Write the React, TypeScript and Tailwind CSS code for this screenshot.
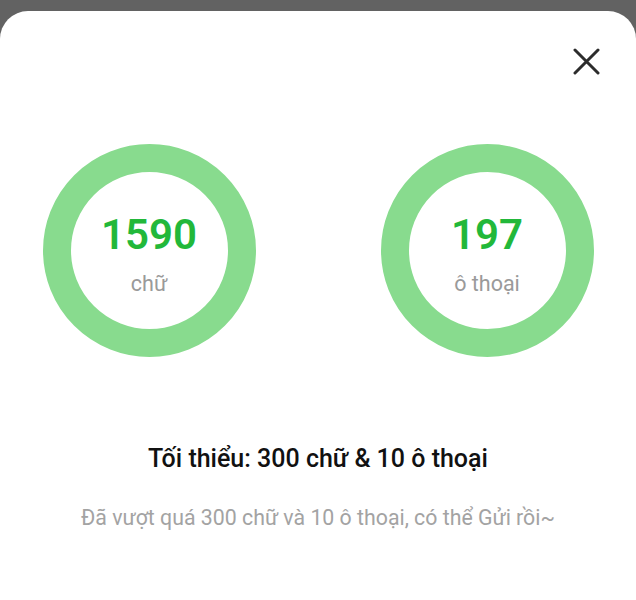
type RingProps = {
  value: number;
  label: string;
};

function CountRing({ value, label }: RingProps) {
  return (
    <div className="flex h-[213px] w-[213px] flex-col items-center justify-center rounded-full border-[28px] border-[#88db8e] pt-[6px]">
      <span className="text-[42px] font-semibold leading-[48px] text-[#22b83a]">
        {value}
      </span>
      <span className="mt-[12px] text-[21.5px] leading-[26px] text-[#9a9a9a]">
        {label}
      </span>
    </div>
  );
}

export default function App() {
  return (
    <div
      className="h-[600px] w-[636px] overflow-hidden bg-[#626262] pt-[11px]"
      style={{ fontFamily: "Roboto, 'Noto Sans', sans-serif" }}
    >
      <div className="flex h-full flex-col rounded-t-[28px] bg-white">
        {/* Close */}
        <div className="flex justify-end pr-[36px] pt-[37px]">
          <button className="flex h-[27px] w-[27px] items-center justify-center text-[#2c2c2c]">
            <svg width="27" height="27" viewBox="0 0 27 27" fill="none">
              <path
                d="M2 2L25 25M25 2L2 25"
                stroke="currentColor"
                strokeWidth="3"
                strokeLinecap="round"
              />
            </svg>
          </button>
        </div>

        {/* Counters */}
        <div className="mt-[69px] flex justify-center gap-[125px]">
          <CountRing value={1590} label="chữ" />
          <CountRing value={197} label="ô thoại" />
        </div>

        {/* Info */}
        <p className="mt-[87px] text-center text-[25px] font-medium leading-[30px] text-[#111111]">
          Tối thiểu: 300 chữ &amp; 10 ô thoại
        </p>
        <p className="mt-[30px] text-center text-[21.3px] leading-[28px] text-[#a3a3a3]">
          Đã vượt quá 300 chữ và 10 ô thoại, có thể Gửi rồi~
        </p>
      </div>
    </div>
  );
}
